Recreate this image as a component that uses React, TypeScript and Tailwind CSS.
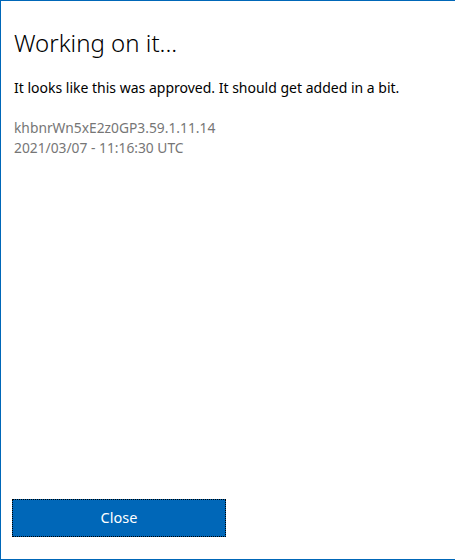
export default function App() {
  return (
    <div
      className="w-[455px] h-[560px] bg-white border-l border-t border-b border-[#0067b8] flex flex-col"
      style={{ fontFamily: '"Segoe UI", "Noto Sans", "Open Sans", sans-serif' }}
    >
      <div className="flex-1 pl-[13px] pr-4">
        <h1 className="mt-[25px] text-[24px] leading-[34px] font-light text-[#000]">Working on it...</h1>
        <p className="mt-[18px] text-[14px] leading-[20px] text-[#000]">
          It looks like this was approved. It should get added in a bit.
        </p>
        <div className="mt-[20px] text-[13.8px] leading-[20px] text-[#767676]">
          <div>khbnrWn5xE2z0GP3.59.1.11.14</div>
          <div>2021/03/07 - 11:16:30 UTC</div>
        </div>
      </div>
      <div className="pl-[11px] pb-[22px]">
        <button className="w-[214px] h-[38px] bg-[#0067b8] text-white text-[14.5px] border border-dotted border-black">
          Close
        </button>
      </div>
    </div>
  );
}
